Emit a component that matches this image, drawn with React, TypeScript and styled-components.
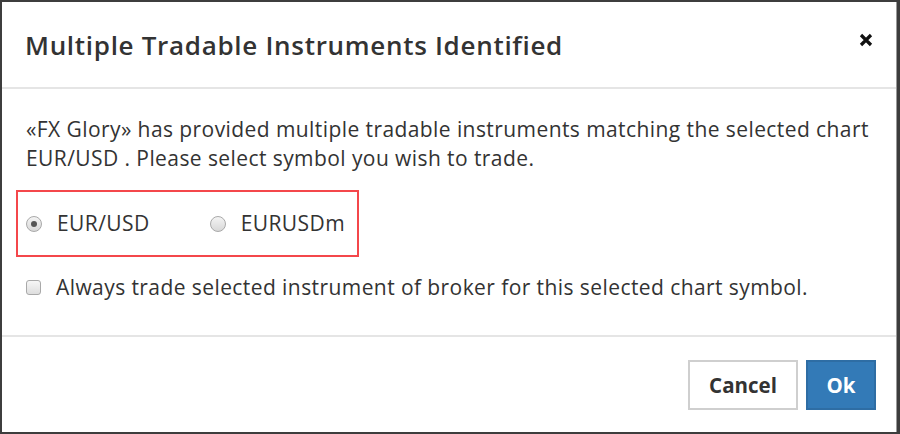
import React from "react";
import styled, { createGlobalStyle } from "styled-components";

const Global = createGlobalStyle`
  html, body { margin: 0; padding: 0; background: #3d3d3d; }
  body { width: 900px; height: 434px; overflow: hidden; font-family: "Open Sans", "Noto Sans", sans-serif; }
`;

const Dialog = styled.div`
  margin: 2px 0 0 2px;
  width: 894px;
  height: 430px;
  background: #fff;
  border-right: 1px solid #9a9a9a;
  display: flex;
  flex-direction: column;
  color: #333;
`;

const Header = styled.div`
  height: 85px;
  border-bottom: 2px solid #e5e5e5;
  display: flex;
  align-items: center;
  justify-content: space-between;
  padding: 0 22px 0 23px;
`;

const Title = styled.h1`
  margin: 0;
  font-size: 26px;
  font-weight: 600;
  color: #333;
  letter-spacing: 0.7px;
`;

const Close = styled.button`
  border: none;
  background: none;
  padding: 0;
  width: 16px;
  height: 16px;
  display: flex;
  align-items: center;
  justify-content: center;
  margin-top: -10px;
`;

const Body = styled.div`
  flex: 1;
  padding: 26px 24px 0 24px;
  font-size: 21px;
  letter-spacing: 0.42px;
  line-height: 29px;
  border-bottom: 2px solid #e5e5e5;
`;

const Message = styled.p`
  margin: 0;
`;

const Highlight = styled.div`
  margin: 17px 0 0 -10px;
  border: 2px solid #f4474b;
  display: flex;
  align-items: center;
  padding-left: 8px;
  gap: 60px;
  box-sizing: border-box;
  width: 343px;
  height: 67px;
`;

const Option = styled.label`
  display: flex;
  align-items: center;
  gap: 15px;
`;

const Radio = styled.span<{ $checked?: boolean }>`
  width: 16px;
  height: 16px;
  border-radius: 50%;
  border: 1px solid #a9a9a9;
  background: linear-gradient(#f4f4f4, #d8d8d8);
  display: flex;
  align-items: center;
  justify-content: center;
  box-sizing: border-box;
  &::after {
    content: "";
    display: ${(p) => (p.$checked ? "block" : "none")};
    width: 6px;
    height: 6px;
    border-radius: 50%;
    background: #555;
  }
`;

const CheckRow = styled.label`
  display: flex;
  align-items: center;
  gap: 15px;
  margin-top: 16px;
`;

const Checkbox = styled.span`
  width: 15px;
  height: 15px;
  border: 1px solid #a9a9a9;
  border-radius: 3px;
  background: linear-gradient(#f6f6f6, #dedede);
  box-sizing: border-box;
  flex-shrink: 0;
`;

const Footer = styled.div`
  height: 95px;
  display: flex;
  justify-content: flex-end;
  align-items: flex-start;
  gap: 8px;
  padding: 23px 20px 0 0;
  box-sizing: border-box;
`;

const Button = styled.button<{ $primary?: boolean }>`
  height: 50px;
  padding: 0;
  font-family: "Open Sans", "Noto Sans", sans-serif;
  font-size: 20.5px;
  font-weight: 700;
  border: 2px solid ${(p) => (p.$primary ? "#2e6da4" : "#cfcfcf")};
  background: ${(p) => (p.$primary ? "#337ab7" : "#fff")};
  color: ${(p) => (p.$primary ? "#fff" : "#333")};
  width: ${(p) => (p.$primary ? "70px" : "110px")};
`;

export default function App() {
  return (
    <>
      <Global />
      <Dialog>
        <Header>
          <Title>Multiple Tradable Instruments Identified</Title>
          <Close aria-label="close">
            <svg width="14" height="14" viewBox="0 0 14 14">
              <path d="M2 2 L12 12 M12 2 L2 12" stroke="#111" strokeWidth="3.2" strokeLinecap="butt" />
            </svg>
          </Close>
        </Header>
        <Body>
          <Message>
            «FX Glory» has provided multiple tradable instruments matching the selected chart
            <br />
            EUR/USD . Please select symbol you wish to trade.
          </Message>
          <Highlight>
            <Option>
              <Radio $checked />
              EUR/USD
            </Option>
            <Option>
              <Radio />
              EURUSDm
            </Option>
          </Highlight>
          <CheckRow>
            <Checkbox />
            Always trade selected instrument of broker for this selected chart symbol.
          </CheckRow>
        </Body>
        <Footer>
          <Button>Cancel</Button>
          <Button $primary>Ok</Button>
        </Footer>
      </Dialog>
    </>
  );
}
